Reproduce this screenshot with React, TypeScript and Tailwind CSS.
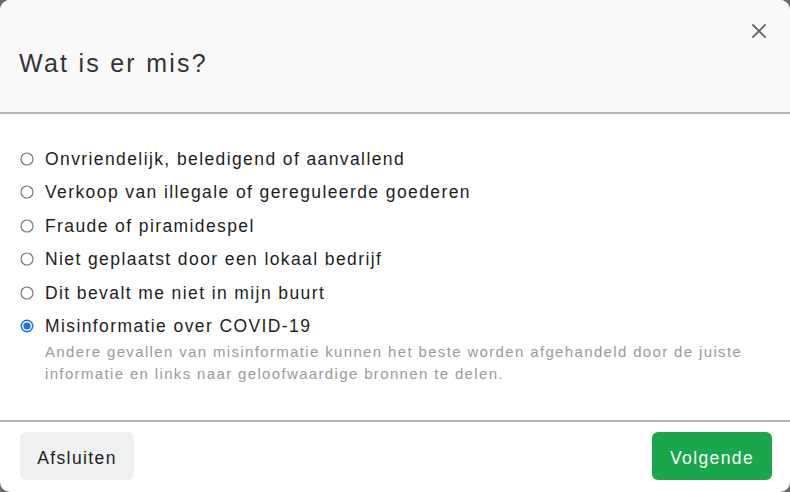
import React, { useState } from 'react';

const options = [
  'Onvriendelijk, beledigend of aanvallend',
  'Verkoop van illegale of gereguleerde goederen',
  'Fraude of piramidespel',
  'Niet geplaatst door een lokaal bedrijf',
  'Dit bevalt me niet in mijn buurt',
  'Misinformatie over COVID-19',
];

const Radio: React.FC<{ checked: boolean }> = ({ checked }) => (
  <svg width="14" height="14" viewBox="0 0 14 14" className="shrink-0">
    {checked ? (
      <>
        <circle cx="7" cy="7" r="6.5" fill="#1a73e8" />
        <circle cx="7" cy="7" r="5" fill="#ffffff" />
        <circle cx="7" cy="7" r="3.6" fill="#1a73e8" />
      </>
    ) : (
      <circle cx="7" cy="7" r="6" fill="#ffffff" stroke="#777777" strokeWidth="1.2" />
    )}
  </svg>
);

const App: React.FC = () => {
  const [selected, setSelected] = useState(5);

  return (
    <div className="w-[790px] h-[492px] bg-[#6b6b6b]" style={{ fontFamily: '"Liberation Sans", Arial, sans-serif' }}>
      <div className="w-full h-full bg-white rounded-[10px] overflow-hidden flex flex-col">
        <div className="h-[114px] shrink-0 bg-[#f9f9f9] border-b-2 border-[#b5b5b5] flex items-center justify-between pl-[19px] pr-[24px] relative">
          <h1 className="text-[25px] tracking-[0.09em] text-[#333333] mt-[15px]">Wat is er mis?</h1>
          <button className="absolute right-[24px] top-[24px] text-[#606770]">
            <svg width="14" height="14" viewBox="0 0 14 14">
              <path d="M1 1L13 13M13 1L1 13" stroke="currentColor" strokeWidth="1.8" strokeLinecap="round" />
            </svg>
          </button>
        </div>

        <div className="flex-1 pt-[28px] pl-[20px] pr-[30px]">
          {options.map((label, i) => (
            <div key={label}>
              <label
                className="h-[33.5px] flex items-center cursor-pointer"
                onClick={() => setSelected(i)}
              >
                <Radio checked={selected === i} />
                <span className="ml-[11px] text-[17.5px] tracking-[0.08em] text-[#1c1e21]">{label}</span>
              </label>
              {i === 5 && (
                <p className="ml-[25px] -mt-[2px] text-[15px] tracking-[0.09em] leading-[22px] text-[#9a9a9a]">
                  Andere gevallen van misinformatie kunnen het beste worden afgehandeld door de juiste
                  informatie en links naar geloofwaardige bronnen te delen.
                </p>
              )}
            </div>
          ))}
        </div>

        <div className="h-[72px] shrink-0 border-t-2 border-[#b5b5b5] flex items-start justify-between pt-[10px] pl-[20px] pr-[18px]">
          <button className="w-[114px] h-[48px] pt-[4px] rounded-[6px] bg-[#eff0f2] text-[17.5px] tracking-[0.08em] text-[#1c1e21]">
            Afsluiten
          </button>
          <button className="w-[120px] h-[48px] pt-[4px] rounded-[6px] bg-[#1aa64b] text-[17.5px] tracking-[0.08em] text-white">
            Volgende
          </button>
        </div>
      </div>
    </div>
  );
};

export default App;
